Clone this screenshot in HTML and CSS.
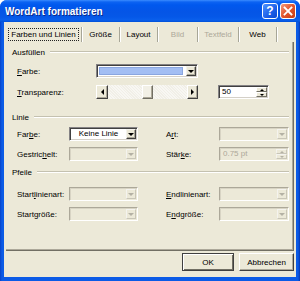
FILE: index.html
```html
<!DOCTYPE html>
<html>
<head>
<meta charset="utf-8">
<link rel="stylesheet" href="styles.css">
</head>
<body>
<div class="window">
  <div class="titlebar">
    <span class="title">WordArt formatieren</span>
    <div class="caption-btns">
      <span class="cbtn help">?</span>
      <span class="cbtn close"><svg width="10" height="10" viewBox="0 0 10 10"><path d="M1.5 1.5 L8.5 8.5 M8.5 1.5 L1.5 8.5" stroke="#fff" stroke-width="1.8" stroke-linecap="square"/></svg></span>
    </div>
  </div>
  <div class="client">
    <div class="tabs">
      <div class="tab first"><span class="focus">Farben und Linien</span></div>
      <div class="tab">Größe</div>
      <div class="tab">Layout</div>
      <div class="tab disabled wide">Bild</div>
      <div class="tab disabled wider">Textfeld</div>
      <div class="tab">Web</div>
    </div>
    <div class="panel">
      <div class="group-title"><span>Ausfüllen</span><i class="etch"></i></div>
      <div class="row fill-row r1">
        <span class="lbl lbl-fill"><u>F</u>arbe:</span>
        <div class="combo wide-ctl">
          <div class="swatch"></div>
          <div class="drop"><i class="arrow"></i></div>
        </div>
      </div>
      <div class="row fill-row r2">
        <span class="lbl lbl-fill"><u>T</u>ransparenz:</span>
        <div class="slider wide-ctl">
          <div class="sbtn"><i class="larrow"></i></div>
          <div class="track"></div>
          <div class="thumb"></div>
          <div class="track"></div>
          <div class="sbtn"><i class="rarrow"></i></div>
        </div>
        <div class="spin">
          <span class="val">50</span>
          <div class="spinbtns"><div class="sb"><i class="uarrow"></i></div><div class="sb"><i class="darrow"></i></div></div>
        </div>
      </div>

      <div class="group-title g2"><span>Linie</span><i class="etch"></i></div>
      <div class="row grid-row r3">
        <span class="lbl">Far<u>b</u>e:</span>
        <div class="combo">
          <span class="ctext">Keine Linie</span>
          <div class="drop"><i class="arrow"></i></div>
        </div>
        <span class="lbl lbl2">A<u>r</u>t:</span>
        <div class="combo off">
          <span class="ctext"></span>
          <div class="drop"><i class="arrow"></i></div>
        </div>
      </div>
      <div class="row grid-row r4">
        <span class="lbl">Gestric<u>h</u>elt:</span>
        <div class="combo off">
          <span class="ctext"></span>
          <div class="drop"><i class="arrow"></i></div>
        </div>
        <span class="lbl lbl2">Stär<u>k</u>e:</span>
        <div class="spin off">
          <span class="val">0.75 pt</span>
          <div class="spinbtns"><div class="sb"><i class="uarrow"></i></div><div class="sb"><i class="darrow"></i></div></div>
        </div>
      </div>

      <div class="group-title g3"><span>Pfeile</span><i class="etch"></i></div>
      <div class="row grid-row r5">
        <span class="lbl">Start<u>l</u>inienart:</span>
        <div class="combo off">
          <span class="ctext"></span>
          <div class="drop"><i class="arrow"></i></div>
        </div>
        <span class="lbl lbl2"><u>E</u>ndlinienart:</span>
        <div class="combo off">
          <span class="ctext"></span>
          <div class="drop"><i class="arrow"></i></div>
        </div>
      </div>
      <div class="row grid-row r6">
        <span class="lbl">Startgröße:</span>
        <div class="combo off">
          <span class="ctext"></span>
          <div class="drop"><i class="arrow"></i></div>
        </div>
        <span class="lbl lbl2">E<u>n</u>dgröße:</span>
        <div class="combo off">
          <span class="ctext"></span>
          <div class="drop"><i class="arrow"></i></div>
        </div>
      </div>
    </div>
    <div class="footer">
      <button class="btn default">OK</button>
      <button class="btn cancel">Abbrechen</button>
    </div>
  </div>
</div>
</body>
</html>
```

FILE: styles.css
```css
* { box-sizing: border-box; }
html, body { margin: 0; padding: 0; background: #fff; }
body {
  width: 300px;
  height: 281px;
  overflow: hidden;
  font-family: "Liberation Sans", Arial, sans-serif;
  font-size: 8px;
  color: #000;
}
u { text-decoration: underline; text-underline-offset: 1px; }

.window {
  width: 300px;
  height: 281px;
  display: flex;
  flex-direction: column;
  background: linear-gradient(to right, #0842C8, #0B5BE6 2px, #0B5BE6 298px, #0636B0);
  border-radius: 7px 7px 0 0;
  overflow: hidden;
}

.titlebar {
  height: 22px;
  flex: none;
  display: flex;
  align-items: center;
  padding: 0 4px 0 5px;
  background: linear-gradient(#3A8CFF 0px, #0C63F2 2px, #0058EE 5px, #0555E6 12px, #0558E8 17px, #0A5FEC 20px, #0050D8 22px);
}
.title {
  flex: 1;
  color: #fff;
  font-weight: bold;
  font-size: 10px;
  text-shadow: 1px 1px 0 #0A2A8A;
}
.caption-btns { display: flex; gap: 2px; }
.cbtn {
  width: 16px;
  height: 16px;
  border: 1px solid #fff;
  border-radius: 3px;
  display: flex;
  align-items: center;
  justify-content: center;
  color: #fff;
  font-weight: bold;
  font-size: 12px;
}
.help { background: linear-gradient(135deg, #4F93FF, #1B5FE8 60%, #0E48D0); }
.close { background: linear-gradient(135deg, #F39A7A, #E2552D 50%, #C63D15); }

.client {
  flex: 1;
  margin: 0 4px 4px 4px;
  background: #ECE9D8;
  display: flex;
  flex-direction: column;
  padding: 5px 2px 0 2px;
}

.tabs {
  display: flex;
  height: 15px;
  flex: none;
}
.tab {
  min-width: 38px;
  padding: 0 4px;
  display: flex;
  align-items: center;
  justify-content: center;
  border-right: 1px solid #A7A697;
  box-shadow: 1px 0 0 #fff;
  color: #000;
}
.tab.first { width: 76px; padding: 0; }
.tab.wide { min-width: 40px; }
.tab.wider { min-width: 41px; }
.tab.disabled { color: #ACA899; }
.focus {
  border: 1px dotted #222;
  padding: 1px 2px;
  line-height: 9px;
}

.panel {
  height: 209px;
  flex: none;
  border-right: 1px solid #716F64;
  border-bottom: 1px solid #716F64;
  box-shadow: inset -1px -1px 0 #ACA899;
  padding: 4px 4px 0 6px;
  display: flex;
  flex-direction: column;
}

.group-title {
  display: flex;
  align-items: center;
  height: 12px;
  flex: none;
}
.group-title .etch {
  flex: 1;
  height: 2px;
  border-top: 1px solid #C4C1B0;
  border-bottom: 1px solid #fff;
  margin-left: 5px;
}
.g2 { margin-top: 12px; }
.g3 { margin-top: 5px; }

.row {
  height: 14px;
  flex: none;
  margin-left: 5px;
  align-items: center;
}
.fill-row { display: flex; }
.grid-row {
  display: grid;
  grid-template-columns: 52px 69px 28px 53px 70px;
}
.r1 { margin-top: 6px; }
.r2 { margin-top: 7px; }
.r3 { margin-top: 4px; }
.r4 { margin-top: 6px; }
.r5 { margin-top: 9px; }
.r6 { margin-top: 6px; }

.lbl { white-space: nowrap; }
.lbl-fill { width: 79px; flex: none; }
.lbl2 { grid-column: 4; }
.wide-ctl { width: 102px; flex: none; }

.combo {
  height: 14px;
  display: flex;
  border: 1px solid;
  border-color: #848284 #fff #fff #848284;
  box-shadow: inset 1px 1px 0 #404040, inset -1px -1px 0 #D4D0C8;
  background: #fff;
  padding: 1px;
}
.combo.off {
  background: #ECE9D8;
  border-color: #ACA899 #fff #fff #ACA899;
  box-shadow: inset 1px 1px 0 #D8D4C4;
}
.swatch {
  flex: 1;
  background: #A3BEF3;
  border: 1px solid #8AA6E0;
  margin: 1px 3px 1px 1px;
}
.ctext {
  flex: 1;
  display: flex;
  align-items: center;
  justify-content: center;
  line-height: 10px;
}
.drop {
  width: 10px;
  flex: none;
  background: #ECE9D8;
  border: 1px solid;
  border-color: #F4F3EE #404040 #404040 #F4F3EE;
  box-shadow: inset -1px -1px 0 #ACA899;
  display: flex;
  align-items: center;
  justify-content: center;
}
.arrow {
  width: 0; height: 0;
  border-left: 3px solid transparent;
  border-right: 3px solid transparent;
  border-top: 3px solid #000;
}
.off .drop {
  border-color: #F4F3EE #C9C6B8 #C9C6B8 #F4F3EE;
  box-shadow: none;
}
.off .arrow { border-top-color: #B4B1A4; }

.slider {
  height: 14px;
  display: flex;
  background: #F5F4EF;
}
.sbtn {
  width: 12px;
  flex: none;
  background: #ECE9D8;
  border: 1px solid;
  border-color: #fff #404040 #404040 #fff;
  box-shadow: inset -1px -1px 0 #ACA899;
  display: flex;
  align-items: center;
  justify-content: center;
}
.sbtn:last-child { width: 11px; }
.larrow {
  width: 0; height: 0;
  border-top: 3px solid transparent;
  border-bottom: 3px solid transparent;
  border-right: 3px solid #000;
}
.rarrow {
  width: 0; height: 0;
  border-top: 3px solid transparent;
  border-bottom: 3px solid transparent;
  border-left: 3px solid #000;
}
.track {
  flex: 1;
  background: repeating-linear-gradient(45deg, #F8F7F3 0 1px, #F1EFE7 1px 2px);
}
.thumb {
  width: 11px;
  flex: none;
  background: #F2F0E6;
  border: 1px solid;
  border-color: #fff #716F64 #716F64 #fff;
  box-shadow: inset -1px -1px 0 #ACA899;
}

.spin {
  height: 14px;
  width: 51px;
  display: flex;
  margin-left: 20px;
  border: 1px solid;
  border-color: #848284 #fff #fff #848284;
  box-shadow: inset 1px 1px 0 #404040, inset -1px -1px 0 #D4D0C8;
  background: #fff;
  padding: 1px;
}
.grid-row .spin { margin-left: 0; width: 70px; }
.spin .val {
  flex: 1;
  padding-left: 2px;
  line-height: 10px;
}
.spin.off {
  background: #ECE9D8;
  border-color: #ACA899 #fff #fff #ACA899;
  box-shadow: inset 1px 1px 0 #D8D4C4;
}
.spin.off .val { color: #ACA899; }
.spinbtns {
  width: 11px;
  flex: none;
  display: flex;
  flex-direction: column;
}
.sb {
  flex: 1;
  background: #ECE9D8;
  border: 1px solid;
  border-color: #fff #716F64 #716F64 #fff;
  display: flex;
  align-items: center;
  justify-content: center;
}
.off .sb { border-color: #F4F3EE #C9C6B8 #C9C6B8 #F4F3EE; }
.uarrow {
  width: 0; height: 0;
  border-left: 2px solid transparent;
  border-right: 2px solid transparent;
  border-bottom: 2px solid #000;
}
.darrow {
  width: 0; height: 0;
  border-left: 2px solid transparent;
  border-right: 2px solid transparent;
  border-top: 2px solid #000;
}
.off .uarrow { border-bottom-color: #B4B1A4; }
.off .darrow { border-top-color: #B4B1A4; }

.footer {
  display: flex;
  justify-content: flex-end;
  gap: 5px;
  margin-top: 2px;
  padding-right: 0;
}
.btn {
  height: 18px;
  font-family: "Liberation Sans", Arial, sans-serif;
  font-size: 8px;
  color: #000;
  background: #ECE9D8;
  border: 1px solid;
  border-color: #fff #404040 #404040 #fff;
  box-shadow: inset -1px -1px 0 #ACA899;
  padding: 0;
}
.btn.default {
  width: 52px;
  border-color: #404040;
  box-shadow: inset 1px 1px 0 #fff, inset -1px -1px 0 #716F64;
}
.btn.cancel { width: 55px; }
```
